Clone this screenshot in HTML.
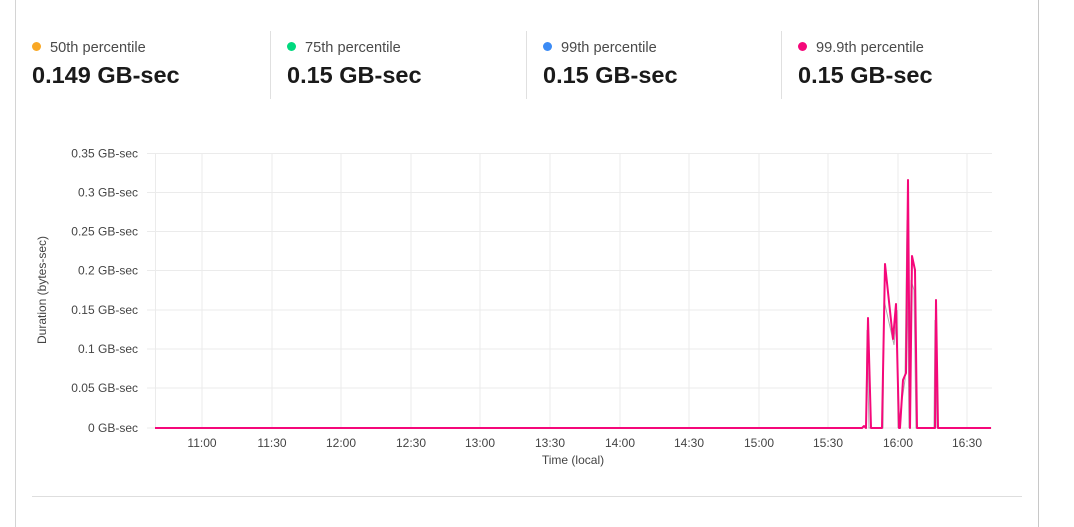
<!DOCTYPE html>
<html><head><meta charset="utf-8"><style>
body{margin:0;width:1074px;height:527px;background:#fff;font-family:"Liberation Sans",sans-serif;position:relative;overflow:hidden}
.bl{position:absolute;left:15px;top:0;width:1px;height:527px;background:#d4d4d4}
.br{position:absolute;left:1038px;top:0;width:1px;height:527px;background:#c8c8c8}
.stat{position:absolute;top:31px;height:68px}
.lab{position:absolute;top:9px;left:18px;font-size:14.6px;color:#4a4a4a;white-space:nowrap}
.dot{position:absolute;top:11px;left:0;width:9px;height:9px;border-radius:50%}
.val{position:absolute;top:31px;left:0;font-size:23.5px;font-weight:bold;color:#1a1a1a;white-space:nowrap;letter-spacing:0}
.div{position:absolute;top:31px;width:1px;height:68px;background:#e0e0e0}
.bot{position:absolute;left:32px;top:496px;width:990px;height:1px;background:#dedede}
</style></head><body>
<div class="bl"></div><div class="br"></div>
<div class="stat" style="left:32px"><span class="dot" style="background:#f9a825"></span><span class="lab">50th percentile</span><span class="val">0.149 GB-sec</span></div>
<div class="div" style="left:270px"></div>
<div class="stat" style="left:287px"><span class="dot" style="background:#00d97e"></span><span class="lab">75th percentile</span><span class="val">0.15 GB-sec</span></div>
<div class="div" style="left:526px"></div>
<div class="stat" style="left:543px"><span class="dot" style="background:#3b8bf5"></span><span class="lab">99th percentile</span><span class="val">0.15 GB-sec</span></div>
<div class="div" style="left:781px"></div>
<div class="stat" style="left:798px"><span class="dot" style="background:#f5087a"></span><span class="lab">99.9th percentile</span><span class="val">0.15 GB-sec</span></div>
<svg width="1074" height="527" style="position:absolute;left:0;top:0" font-family="Liberation Sans, sans-serif">
<g stroke="#ebebeb" stroke-width="1">
<line x1="147" y1="153.5" x2="992" y2="153.5"/><line x1="147" y1="192.5" x2="992" y2="192.5"/><line x1="147" y1="231.5" x2="992" y2="231.5"/><line x1="147" y1="270.5" x2="992" y2="270.5"/><line x1="147" y1="310" x2="992" y2="310"/><line x1="147" y1="349" x2="992" y2="349"/><line x1="147" y1="388" x2="992" y2="388"/><line x1="147" y1="428" x2="992" y2="428"/>
<line x1="155.5" y1="153" x2="155.5" y2="428"/>
<line x1="202" y1="153" x2="202" y2="428"/><line x1="272" y1="153" x2="272" y2="428"/><line x1="341" y1="153" x2="341" y2="428"/><line x1="411" y1="153" x2="411" y2="428"/><line x1="480" y1="153" x2="480" y2="428"/><line x1="550" y1="153" x2="550" y2="428"/><line x1="620" y1="153" x2="620" y2="428"/><line x1="689" y1="153" x2="689" y2="428"/><line x1="759" y1="153" x2="759" y2="428"/><line x1="828" y1="153" x2="828" y2="428"/><line x1="898" y1="153" x2="898" y2="428"/><line x1="967" y1="153" x2="967" y2="428"/>
</g>
<g font-size="12" fill="#444" text-anchor="end">
<text x="138" y="157.5">0.35 GB-sec</text><text x="138" y="196.5">0.3 GB-sec</text><text x="138" y="235.5">0.25 GB-sec</text><text x="138" y="274.5">0.2 GB-sec</text><text x="138" y="314">0.15 GB-sec</text><text x="138" y="353">0.1 GB-sec</text><text x="138" y="392">0.05 GB-sec</text><text x="138" y="432">0 GB-sec</text>
</g>
<g font-size="12" fill="#444" text-anchor="middle">
<text x="202" y="447">11:00</text><text x="272" y="447">11:30</text><text x="341" y="447">12:00</text><text x="411" y="447">12:30</text><text x="480" y="447">13:00</text><text x="550" y="447">13:30</text><text x="620" y="447">14:00</text><text x="689" y="447">14:30</text><text x="759" y="447">15:00</text><text x="828" y="447">15:30</text><text x="898" y="447">16:00</text><text x="967" y="447">16:30</text>
<text x="573" y="464">Time (local)</text>
<text transform="translate(46,290) rotate(-90)">Duration (bytes-sec)</text>
</g>
<polyline fill="none" stroke="#aaa" stroke-width="1" points="866,428 867,330 869,428 883,428 884,300 894,345 897,310 898,428 905,380 907,220 909,428 911,280 914,290 916,428 934,428 935,320 937,428"/>
<polyline fill="none" stroke="#f5087a" stroke-width="2" stroke-linejoin="round" points="155,428 862,428 864,426 866,428 868,318 871,428 882,428 885,264 893,339 896,304 899,428 900,428 903,380 906,373 908,180 910,428 912,256 915,270 917,428 935,428 936,300 938,428 991,428"/>
</svg>
<div class="bot"></div>
</body></html>
